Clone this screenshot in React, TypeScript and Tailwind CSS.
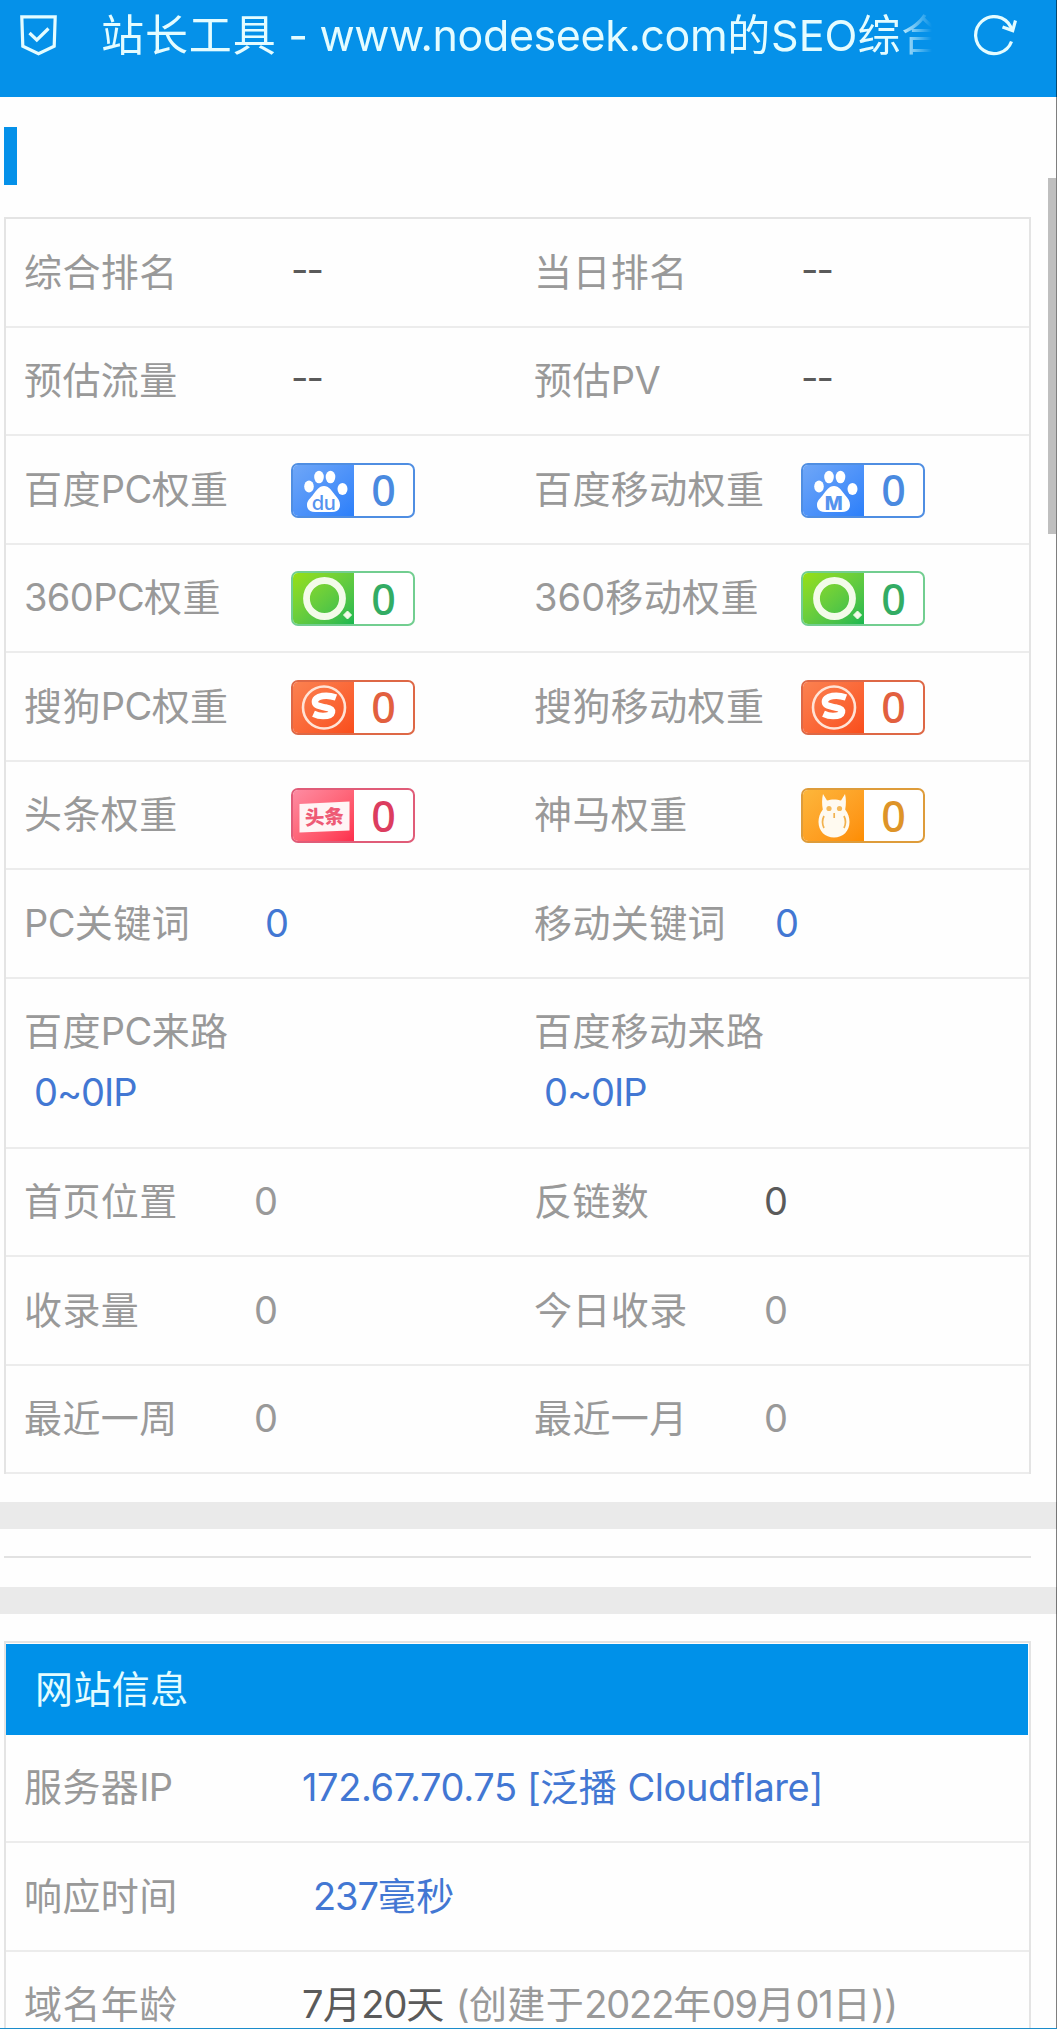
import type { ReactNode } from "react";

/** Tracking of one run: CJK is opened up, bare numbers are set tight. */
function tracking(run: string) {
  if (/[\u2e80-\u9fff]/.test(run)) return "tracking-[0.4px]";
  if (run === "360") return "tracking-[0.1px]";
  if (/^\d{2,}$/.test(run)) return "tracking-[-1.1px]";
  if (run.length >= 10) return "tracking-[-0.4px]";
  if (run.includes("~")) return "tracking-[-1px]";
  return "tracking-[-0.6px]";
}

/** Splits a string into Latin and CJK runs so each gets its own tracking. */
function Txt({ children }: { children: string }) {
  const runs = children.match(/[\u2e80-\u9fff]+|[^\u2e80-\u9fff]+/g) ?? [];
  return (
    <>
      {runs.map((run, i) => (
        <span key={i} className={tracking(run)}>
          {run}
        </span>
      ))}
    </>
  );
}

type BadgeKind = "baidu" | "baiduM" | "so" | "sogou" | "toutiao" | "shenma";

const badgeStyle: Record<BadgeKind, { border: string; fill: string; digit: string }> = {
  baidu: { border: "border-[#4f8ee2]", fill: "from-[#6ea6f7] to-[#2b7ffa]", digit: "text-[#4a8ae0]" },
  baiduM: { border: "border-[#4f8ee2]", fill: "from-[#6ea6f7] to-[#2b7ffa]", digit: "text-[#4a8ae0]" },
  so: { border: "border-[#72ce90]", fill: "from-[#96e00c] to-[#16b850]", digit: "text-[#33ac64]" },
  sogou: { border: "border-[#de6846]", fill: "from-[#fb8150] to-[#f94d1a]", digit: "text-[#e2603f]" },
  toutiao: { border: "border-[#e05c78]", fill: "from-[#fd8ba2] to-[#fd2c4c]", digit: "text-[#dc3d5f]" },
  shenma: { border: "border-[#de9c3a]", fill: "from-[#fdb63a] to-[#fd8d00]", digit: "text-[#de9428]" },
};

function Paw({ label }: { label: string }) {
  return (
    <>
      <g fill="#fff">
        <ellipse cx="18" cy="23.500" rx="4.800" ry="6" />
        <ellipse cx="28" cy="14" rx="4.800" ry="6.300" />
        <ellipse cx="39.500" cy="14" rx="4.800" ry="6.300" />
        <ellipse cx="51.500" cy="26" rx="5" ry="6" />
        <path d="M33 23c5 0 7.500 4.500 11 9 3 3.600 5 6 5 10 0 4.500-3 7-8 7H24c-5 0-8-2.500-8-7 0-4 2.500-6 5.500-9.500C25 28 28 23 33 23z" />
      </g>
      <text
        x="32.500"
        y="46.500"
        textAnchor="middle"
        fontSize={label === "M" ? 19 : 20}
        fontWeight={label === "M" ? 800 : 500}
        fill="#5593ee"
        fontFamily="Inter, sans-serif"
        letterSpacing="-0.500"
      >
        {label}
      </text>
    </>
  );
}

function BadgeIcon({ kind }: { kind: BadgeKind }) {
  return (
    <svg viewBox="0 0 62 54" className="-m-[2px] h-[54px] w-[62px] max-w-none">
      {kind === "baidu" && <Paw label="du" />}
      {kind === "baiduM" && <Paw label="M" />}
      {kind === "so" && (
        <>
          <circle cx="33.500" cy="27.500" r="18" fill="none" stroke="#f3fbe9" strokeWidth="6.800" />
          <path d="M56.500 40l4 4-4 4-4-4z" fill="#f3fbe9" stroke="#f3fbe9" strokeWidth="1" />
        </>
      )}
      {kind === "sogou" && (
        <>
          <circle cx="33" cy="27.500" r="21" fill="none" stroke="#ffe3d6" strokeWidth="2.600" />
          <path
            d="M45 17.500c-5-1.800-9.500-2.300-13.500-1.500-5.500 1-8 3.500-7.500 6.500.5 3.500 6 4 10.500 5 4.500.9 7 2 6.500 4.500-.6 3-5 4-9 4-3.500 0-6.500-.8-9.500-2.200"
            fill="none"
            stroke="#fff"
            strokeWidth="6.500"
          />
        </>
      )}
      {kind === "toutiao" && (
        <>
          <path d="M8.500 16l50-2.500V42.500L8.500 44.500z" fill="#fff4f5" />
          <text
            x="33.500"
            y="36"
            textAnchor="middle"
            fontSize="19.500"
            fontWeight="900"
            fill="#ee5a75"
            fontFamily="'Noto Sans CJK SC', sans-serif"
            transform="rotate(-3 33 30)"
          >
            头条
          </text>
        </>
      )}
      {kind === "shenma" && (
        <>
          <path
            d="M22 6l4 6.500c4-1.500 10-1.500 14 0L44 6c1.200 5 1.200 10 .2 15.500 3 4 4.300 8 4.300 12.500 0 9-6.500 15.500-15.500 15.500S17.500 43 17.500 34c0-4.500 1.300-8.500 4.300-12.500-1-5.500-1-10.500.2-15.500z"
            fill="#fffaf0"
          />
          <g fill="#f5b95a">
            <circle cx="28" cy="20.500" r="2.600" />
            <circle cx="38.500" cy="20.500" r="2.600" />
          </g>
          <path
            d="M23 28c-2 4-2 8 0 12M43 28c2 4 2 8 0 12M33.200 25v5"
            fill="none"
            stroke="#f2b24f"
            strokeWidth="1.700"
          />
        </>
      )}
    </svg>
  );
}

function Badge({ kind }: { kind: BadgeKind }) {
  const s = badgeStyle[kind];
  return (
    <span className={`flex h-[55px] w-[124px] rounded-[7px] border-[2.5px] bg-white ${s.border}`}>
      <span className={`block w-[61px] rounded-l-[5px] bg-linear-to-br ${s.fill}`}>
        <BadgeIcon kind={kind} />
      </span>
      <span
        className={`flex flex-1 items-center justify-center font-['Noto_Sans'] text-[43px] leading-[50px] font-medium ${s.digit}`}
      >
        0
      </span>
    </span>
  );
}

const BLUE = "text-[#4277d3]";
const GRAY = "text-[#999]";
const DARK = "text-[#5a5a5a]";

interface CellData {
  label: string;
  value?: string;
  badge?: BadgeKind;
  /** Width of the label column. */
  w: string;
  tone?: string;
}

const W_WIDE = "w-[267px]";
const W_LINK = "w-[241px]";
const W_NUM = "w-[230px]";

const rows: { h: string; cells: [CellData, CellData]; stacked?: boolean }[] = [
  { h: "h-[109px]", cells: [{ label: "综合排名", value: "--", w: W_WIDE, tone: DARK }, { label: "当日排名", value: "--", w: W_WIDE, tone: DARK }] },
  { h: "h-[108px]", cells: [{ label: "预估流量", value: "--", w: W_WIDE, tone: DARK }, { label: "预估PV", value: "--", w: W_WIDE, tone: DARK }] },
  { h: "h-[109px]", cells: [{ label: "百度PC权重", badge: "baidu", w: W_WIDE }, { label: "百度移动权重", badge: "baiduM", w: W_WIDE }] },
  { h: "h-[108px]", cells: [{ label: "360PC权重", badge: "so", w: W_WIDE }, { label: "360移动权重", badge: "so", w: W_WIDE }] },
  { h: "h-[109px]", cells: [{ label: "搜狗PC权重", badge: "sogou", w: W_WIDE }, { label: "搜狗移动权重", badge: "sogou", w: W_WIDE }] },
  { h: "h-[108px]", cells: [{ label: "头条权重", badge: "toutiao", w: W_WIDE }, { label: "神马权重", badge: "shenma", w: W_WIDE }] },
  { h: "h-[109px]", cells: [{ label: "PC关键词", value: "0", w: W_LINK, tone: BLUE }, { label: "移动关键词", value: "0", w: W_LINK, tone: BLUE }] },
  { h: "h-[170px]", stacked: true, cells: [{ label: "百度PC来路", value: "0~0IP", w: "", tone: BLUE }, { label: "百度移动来路", value: "0~0IP", w: "", tone: BLUE }] },
  { h: "h-[108px]", cells: [{ label: "首页位置", value: "0", w: W_NUM, tone: GRAY }, { label: "反链数", value: "0", w: W_NUM, tone: DARK }] },
  { h: "h-[109px]", cells: [{ label: "收录量", value: "0", w: W_NUM, tone: GRAY }, { label: "今日收录", value: "0", w: W_NUM, tone: GRAY }] },
  { h: "h-[108px]", cells: [{ label: "最近一周", value: "0", w: W_NUM, tone: GRAY }, { label: "最近一月", value: "0", w: W_NUM, tone: GRAY }] },
];

function Cell({ label, value, badge, w, tone, stacked }: CellData & { stacked?: boolean }) {
  if (stacked) {
    return (
      <div className="flex w-[510px] flex-col pt-[22px] pl-[18px] leading-[61px]">
        <span className={GRAY}><Txt>{label}</Txt></span>
        <span className={`pl-[10px] ${tone}`}><Txt>{value!}</Txt></span>
      </div>
    );
  }
  return (
    <div className="flex w-[510px] items-center pb-[2px] pl-[18px]">
      <span className={`${w} ${GRAY}`}><Txt>{label}</Txt></span>
      {badge ? (
        <span className="mt-[3px]"><Badge kind={badge} /></span>
      ) : value === "--" ? (
        <span className={`-mt-[6px] tracking-[-2px] ${tone}`}>--</span>
      ) : (
        <span className={tone}><Txt>{value!}</Txt></span>
      )}
    </div>
  );
}

function InfoRow({ h, label, children }: { h: string; label: string; children: ReactNode }) {
  return (
    <div className={`flex items-center border-b-2 border-[#ececec] pb-[2px] pl-[18px] whitespace-nowrap ${h}`}>
      <span className={`w-[278px] shrink-0 ${GRAY}`}><Txt>{label}</Txt></span>
      {children}
    </div>
  );
}

export default function App() {
  return (
    <div
      lang="zh-CN"
      className="relative flex h-[2029px] w-[1057px] flex-col overflow-hidden bg-[#fefefe] font-['Inter','Noto_Sans_CJK_SC',sans-serif] text-[38px] leading-[50px]"
    >
      <header className="flex h-[97px] shrink-0 items-start bg-[#0591e9] text-[#e4fcff]">
        <svg viewBox="0 0 37 41" className="mt-[15px] ml-[20px] h-[41px] w-[37px]" fill="none" stroke="currentColor" strokeWidth="3.200">
          <path d="M1.800 1.800h33.400l-1 29.500L18.500 38.800 2.800 31.300z" />
          <path d="M9.500 18l7.300 7L28.500 13.500" />
        </svg>
        <div className="mt-[4px] ml-[44px] w-[833px] text-[43px] leading-[62px] whitespace-nowrap [mask-image:linear-gradient(to_right,#000_795px,transparent_831px)]">
          <span className="tracking-[0.9px]">站长工具</span>
          <span className="tracking-[-0.4px]"> - www.nodeseek.com</span>
          <span className="tracking-[0.9px]">的</span>
          <span>SEO</span>
          <span className="tracking-[0.9px]">综合</span>
        </div>
        <svg viewBox="0 0 43 41" className="mt-[15px] ml-[40px] h-[41px] w-[43px]" fill="none" stroke="currentColor" strokeWidth="3.200">
          <path d="M37.500 26.500A18.500 18.500 0 1 1 36.500 11.500l1.500 3" />
          <path d="M28.500 12l10.200 3.600L41.500 5.500" />
        </svg>
      </header>

      <div className="mt-[30px] ml-[4px] h-[58px] w-[12.5px] shrink-0 bg-[#0591e9]" />

      <section className="mt-[32px] ml-[4px] w-[1027px] shrink-0 border-x-2 border-t-2 border-[#e4e4e4]">
        {rows.map((row, i) => (
          <div key={i} className={`flex border-b-2 border-[#ececec] ${row.h}`}>
            <Cell {...row.cells[0]} stacked={row.stacked} />
            <Cell {...row.cells[1]} stacked={row.stacked} />
          </div>
        ))}
      </section>

      <div className="mt-[28px] h-[27px] shrink-0 bg-[#eaeaea]" />
      <div className="mt-[27px] ml-[4px] h-[2px] w-[1027px] shrink-0 bg-[#e2e2e2]" />
      <div className="mt-[29px] h-[27px] shrink-0 bg-[#eaeaea]" />

      <section className="mt-[27px] ml-[4px] w-[1027px] shrink-0 border-x-2 border-t-2 border-[#e4e4e4]">
        <h2 className="mt-px mr-px flex h-[91px] items-center bg-[#0091e9] pb-[2px] pl-[29px] text-[#e4fcff]">
          <Txt>网站信息</Txt>
        </h2>
        <InfoRow h="h-[108px]" label="服务器IP">
          <span className={BLUE}><Txt>172.67.70.75 [泛播 Cloudflare]</Txt></span>
        </InfoRow>
        <InfoRow h="h-[109px]" label="响应时间">
          <span className={`pl-[11px] ${BLUE}`}><Txt>237毫秒</Txt></span>
        </InfoRow>
        <InfoRow h="h-[108px]" label="域名年龄">
          <span className={DARK}><Txt>7月20天</Txt></span>
          <span className={`ml-[11px] ${GRAY}`}><Txt>(创建于2022年09月01日))</Txt></span>
        </InfoRow>
      </section>

      <div className="absolute top-[178px] right-px h-[356px] w-[8px] bg-[#bfbfbf]" />
      <div className="absolute top-0 right-0 h-full w-px bg-black/50" />
      <div className="absolute bottom-0 left-0 h-px w-full bg-[#1b8ccb]" />
    </div>
  );
}
